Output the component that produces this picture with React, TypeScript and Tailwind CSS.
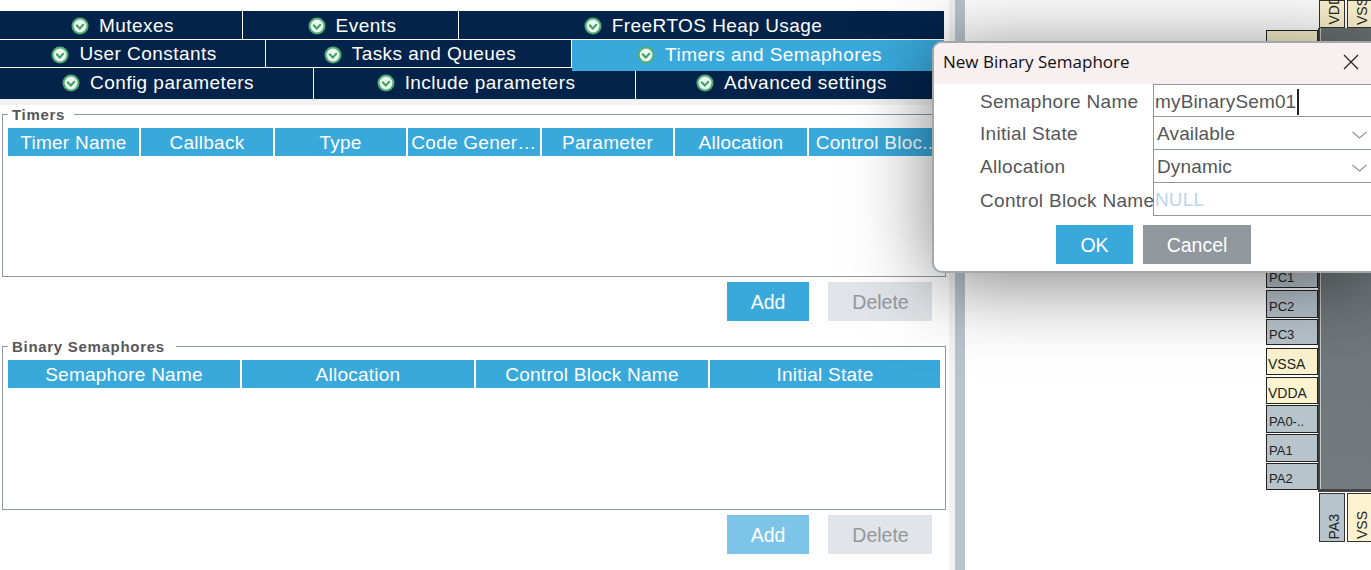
const SANS = "font-['Liberation_Sans',Arial,sans-serif]";

function CheckIcon() {
  return (
    <svg width={18} height={18} viewBox="0 0 18 18" className="shrink-0">
      <circle cx={9} cy={9} r={8.5} fill="#4fae72" />
      <circle cx={9} cy={9} r={6.4} fill="#eaf6ef" />
      <path d="M5.2 7.8l3.6 3.7 4-4.4" fill="none" stroke="#3f9e63" strokeWidth={2} />
    </svg>
  );
}

function Tab({ label, width, active, last, className }: { label: string; width: number; active?: boolean; last?: boolean; className?: string }) {
  return (
    <div
      style={{ width }}
      className={`flex shrink-0 items-center justify-center gap-[10px] pl-[3px] text-[19px] tracking-[0.45px] text-white ${
        active ? "relative z-10 h-[31px] bg-[#39a9dc]" : "bg-[#03234b]"
      } ${last ? "" : "border-r border-white"} ${className ?? ""}`}
    >
      <CheckIcon />
      <span>{label}</span>
    </div>
  );
}

function HeaderCell({ label, width }: { label: string; width: number }) {
  return (
    <div
      style={{ width }}
      className="flex h-full shrink-0 items-center justify-center overflow-hidden whitespace-nowrap bg-[#39a9dc] pt-[3px] text-[19px] tracking-[0.25px] text-white"
    >
      {label}
    </div>
  );
}

function Group({ title, legendWidth, height, children }: { title: string; legendWidth: number; height: number; children: React.ReactNode }) {
  return (
    <div style={{ height }} className="relative mx-[2px] w-[944px] border border-[#90989e] px-[5px] pt-[13px]">
      <div
        style={{ width: legendWidth }}
        className="absolute left-[5px] top-[-9px] bg-white pl-[4px] text-[15px] leading-[18px] font-bold tracking-[0.7px] text-[#54565a]"
      >
        {title}
      </div>
      {children}
    </div>
  );
}

function Buttons({ faded, className }: { faded?: boolean; className?: string }) {
  return (
    <div className={`flex w-[932px] justify-end gap-[19px] pt-[1px] ${className ?? ""}`}>
      <button className={`h-[39px] w-[82px] pt-[2px] text-[19.5px] text-white ${faded ? "bg-[#7cc5e9]" : "bg-[#39a9dc]"}`}>Add</button>
      <button className="h-[39px] w-[104px] bg-[#e1e4e8] pl-[1px] pt-[2px] text-[19.5px] text-[#93989d]">Delete</button>
    </div>
  );
}

function SidePin({ label, power, h, mb }: { label: string; power?: boolean; h: number; mb: number }) {
  return (
    <div
      style={{ height: h, marginBottom: mb }}
      className={`flex items-center border border-[#222] pt-[5px] text-[#222] ${
        power ? "bg-[#fbf3cf] pl-[1px] text-[14px]" : "bg-[#b8c4cb] pl-[2px] text-[13px]"
      }`}
    >
      {label}
    </div>
  );
}

function EdgePin({ label, power, h }: { label: string; power?: boolean; h: number }) {
  return (
    <div
      style={{ height: h }}
      className={`flex w-[26px] shrink-0 items-end justify-center border border-[#333] pb-[2px] pl-[5px] text-[14px] text-[#222] ${power ? "bg-[#fbf3cf]" : "bg-[#b8c4cb]"}`}
    >
      <span className="rotate-180 whitespace-nowrap [writing-mode:vertical-rl]">{label}</span>
    </div>
  );
}

function Row({ label, className, last, children }: { label: string; className?: string; last?: boolean; children: React.ReactNode }) {
  return (
    <div className={`flex ${SANS} ${className ?? "h-[33px]"}`}>
      <div className="flex w-[219px] items-center whitespace-nowrap pl-[46px] pt-[4px] text-[19px] tracking-[0.3px] text-[#54565a]">
        {label}
      </div>
      <div className={`flex flex-1 items-center border-l border-t border-[#90989e] pt-[3px] text-[19px] tracking-[0.15px] text-[#54565a] ${last ? "border-b" : ""}`}>
        {children}
      </div>
    </div>
  );
}

function Chevron() {
  return (
    <svg width={17} height={10} viewBox="0 0 17 10" className="ml-auto mr-[3px]">
      <path d="M1.5 2l7 6 7-6" fill="none" stroke="#90989e" strokeWidth={1.3} />
    </svg>
  );
}

export default function App() {
  return (
    <div className={`relative flex h-[570px] w-[1371px] overflow-hidden bg-white ${SANS}`}>
      {/* LEFT PANEL */}
      <div className="h-full w-[949px] shrink-0 pt-[11px]">
        <div className="w-[944px] bg-[#f0f2f4] pb-[6px]">
          <div className="flex h-[28px]">
            <Tab label="Mutexes" width={243} className="pt-[2px]" />
            <Tab label="Events" width={216} className="pt-[2px]" />
            <Tab label="FreeRTOS Heap Usage" width={485} last className="pt-[2px]" />
          </div>
          <div className="flex h-[28px] items-stretch border-t border-white">
            <Tab label="User Constants" width={266} className="pt-[2px]" />
            <Tab label="Tasks and Queues" width={306} className="pt-[2px]" />
            <Tab label="Timers and Semaphores" width={372} active last className="pb-[1px]" />
          </div>
          <div className="flex h-[32px] border-t border-white">
            <Tab label="Config parameters" width={314} className="pb-[1px]" />
            <Tab label="Include parameters" width={322} className="pb-[1px]" />
            <Tab label="Advanced settings" width={308} last className="pb-[1px]" />
          </div>
        </div>

        <div className="mt-[9px]">
          <Group title="Timers" legendWidth={66} height={163}>
            <div className="flex h-[28px] gap-[2px]">
              <HeaderCell label="Timer Name" width={131} />
              <HeaderCell label="Callback" width={132} />
              <HeaderCell label="Type" width={131} />
              <HeaderCell label="Code Gener…" width={132} />
              <HeaderCell label="Parameter" width={131} />
              <HeaderCell label="Allocation" width={132} />
              <HeaderCell label="Control Bloc.." width={131} />
            </div>
          </Group>
          <Buttons className="mt-[4px]" />
        </div>

        <div className="mt-[25px]">
          <Group title="Binary Semaphores" legendWidth={168} height={164}>
            <div className="flex h-[28px] gap-[2px]">
              <HeaderCell label="Semaphore Name" width={232} />
              <HeaderCell label="Allocation" width={232} />
              <HeaderCell label="Control Block Name" width={232} />
              <HeaderCell label="Initial State" width={230} />
            </div>
          </Group>
          <Buttons faded className="mt-[4px]" />
        </div>
      </div>

      {/* SPLITTER */}
      <div className="h-full w-[6px] shrink-0 bg-[#f0f2f4]" />
      <div className="h-full w-[10px] shrink-0 bg-[#b8c4cb]" />

      {/* CHIP VIEW */}
      <div className="relative flex-1">
        <div className="ml-[301px] flex flex-col">
          <div className="flex gap-[2px] pl-[53px]">
            <EdgePin label="VDD" power h={28} />
            <EdgePin label="VSS" power h={28} />
          </div>
          <div className="flex">
            <div className="w-[52px] shrink-0 pt-[2px]">
              <div className="h-[232px] border border-[#222] bg-[#fbf3cf]" />
              <div className="mt-[1px]">
                <SidePin label="PC1" h={25} mb={2} />
                <SidePin label="PC2" h={28} mb={1} />
                <SidePin label="PC3" h={26} mb={3} />
                <SidePin label="VSSA" power h={27} mb={2} />
                <SidePin label="VDDA" power h={27} mb={1} />
                <SidePin label="PA0-.." h={28} mb={1} />
                <SidePin label="PA1" h={28} mb={1} />
                <SidePin label="PA2" h={27} mb={0} />
              </div>
            </div>
            <div className="h-[464px] flex-1 border-b-[3px] border-l-[2px] border-[#444] bg-gradient-to-b from-[#696f72] to-[#737b7f] shadow-[inset_1px_0_0_#c4c9cb]" />
          </div>
          <div className="flex gap-[2px] pl-[53px] pt-[1px]">
            <EdgePin label="PA3" h={49} />
            <EdgePin label="VSS" power h={49} />
          </div>
        </div>
      </div>

      {/* DIALOG */}
      <div className="absolute left-[932px] top-[41px] z-20 h-[232px] w-[439px] overflow-hidden rounded-l-[10px] border-b-2 border-l-2 border-t-2 border-[#a3a7aa] bg-white shadow-[0_10px_80px_rgba(0,0,0,0.5)]">
        <div className="flex h-[41px] items-center justify-between bg-[#f7eff0] pb-[3px] pl-[9px] pr-[12px] font-['Open_Sans',sans-serif] text-[17px] text-[#111]">
          New Binary Semaphore
          <svg width={16} height={16} viewBox="0 0 16 16">
            <path d="M1 1l14 14M15 1L1 15" fill="none" stroke="#222" strokeWidth={1.2} />
          </svg>
        </div>
        <Row label="Semaphore Name" className="h-[32px]">
          <span className="pl-[1px]">myBinarySem01</span>
          <span className="ml-[1px] h-[26px] w-[2px] bg-[#222]" />
        </Row>
        <Row label="Initial State">
          <span className="pl-[3px]">Available</span>
          <Chevron />
        </Row>
        <Row label="Allocation">
          <span className="pl-[3px]">Dynamic</span>
          <Chevron />
        </Row>
        <Row label="Control Block Name" className="h-[34px]" last>
          <span className="pl-[1px] text-[#bcd3ea]">NULL</span>
        </Row>
        <div className={`mt-[9px] flex gap-[10px] pl-[122px] ${SANS}`}>
          <button className="h-[39px] w-[77px] bg-[#39a9dc] pt-[2px] text-[19.5px] text-white">OK</button>
          <button className="h-[39px] w-[108px] bg-[#90989e] pt-[2px] text-[19.5px] text-white">Cancel</button>
        </div>
      </div>
    </div>
  );
}
